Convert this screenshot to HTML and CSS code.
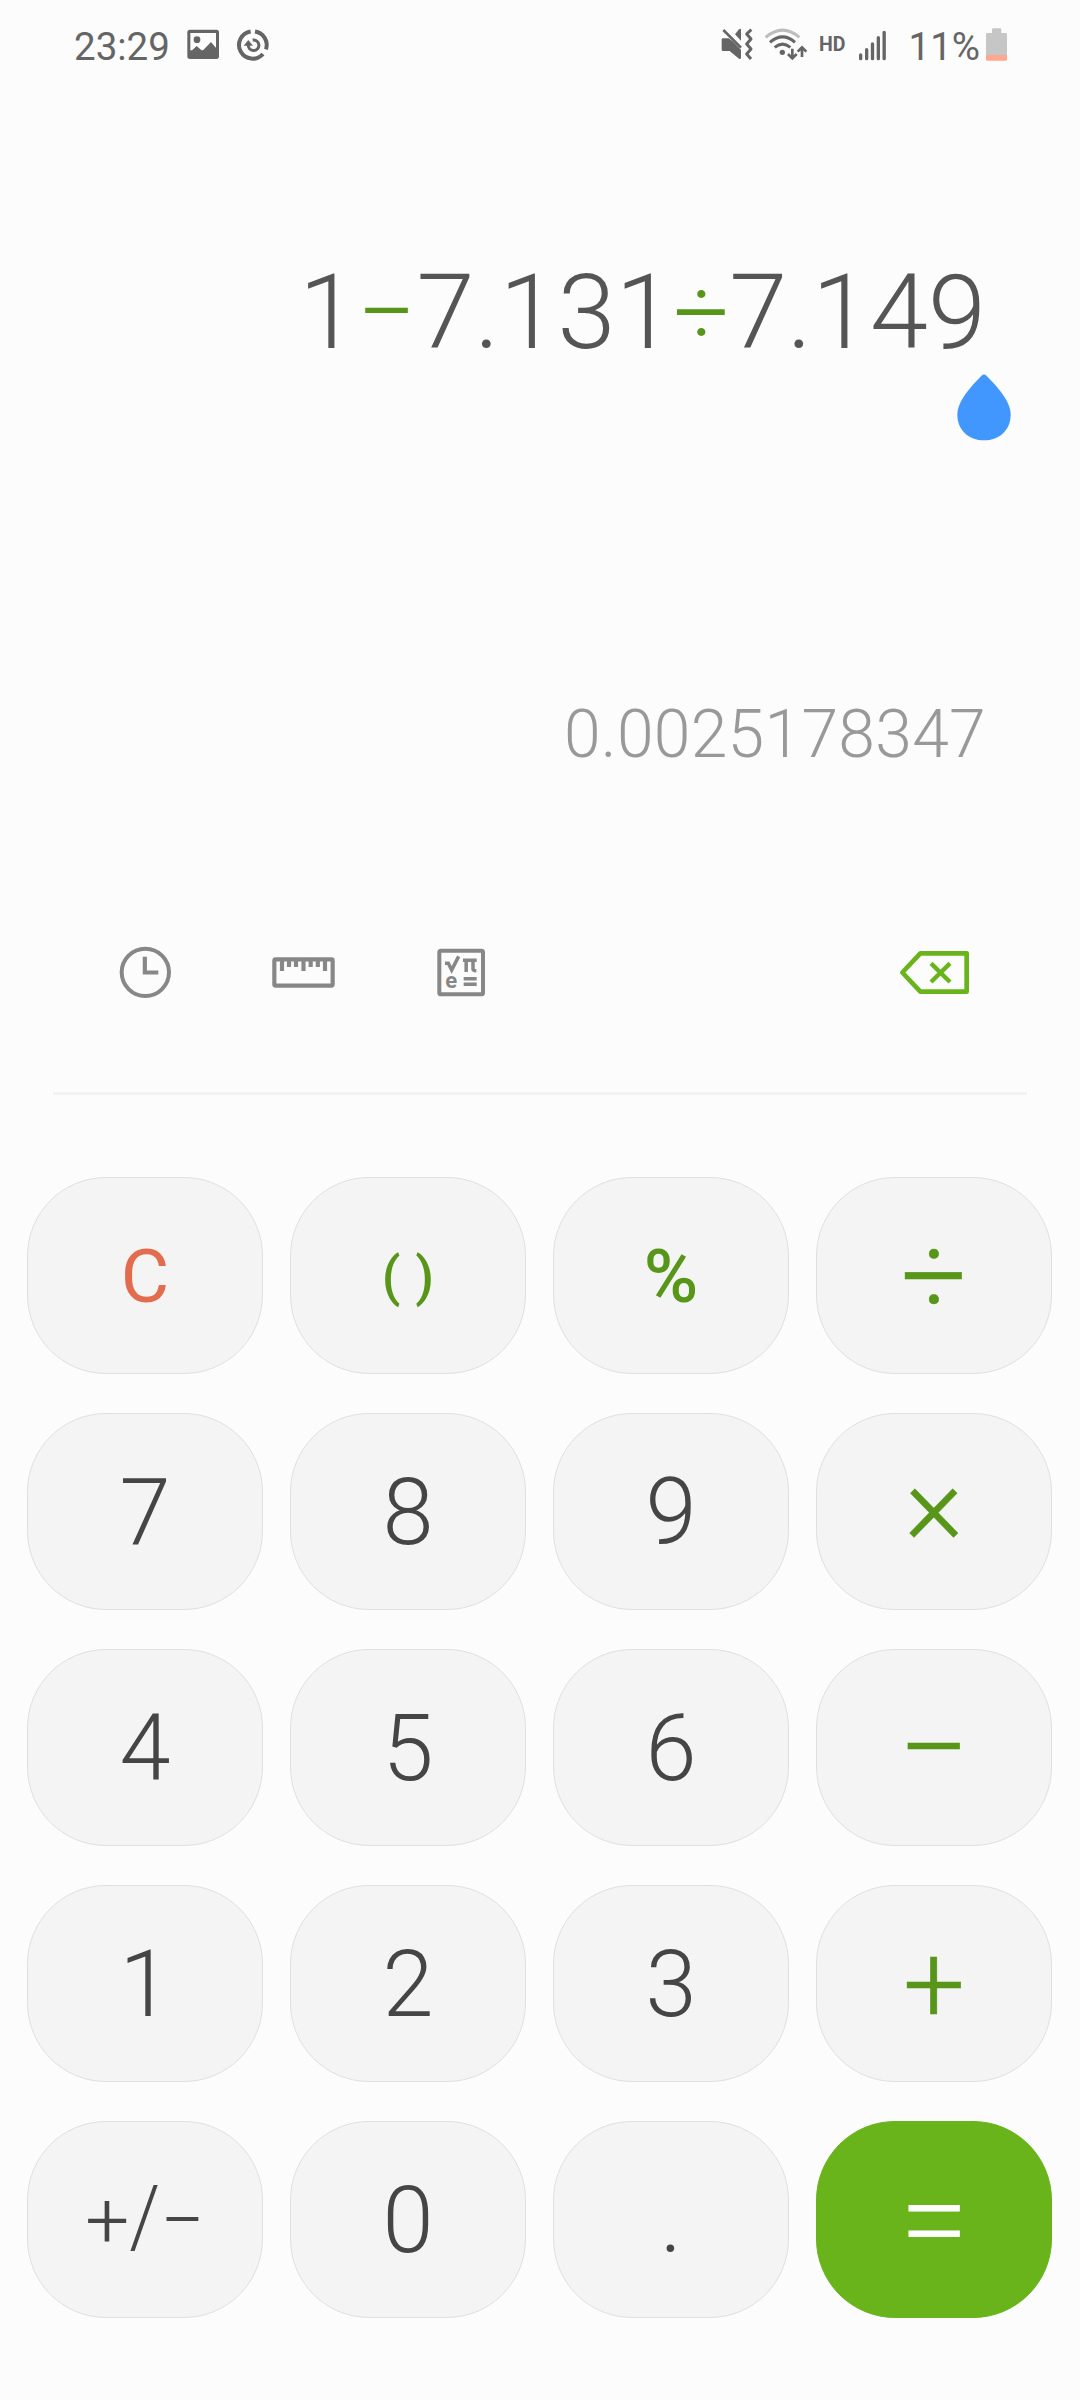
FILE: index.html
```
<!DOCTYPE html>
<html lang="en">
<head>
<meta charset="utf-8">
<title>Calculator</title>
<link rel="stylesheet" href="styles.css">
</head>
<body>
<div class="screen">
  <header class="status">
    <div class="status-left">
      <span class="status-text">23:29</span>
      <svg class="ic-photo" viewBox="378 30 102 120" width="34" height="40"><rect x="382" y="44" width="95" height="88" rx="8" fill="#656565"/><rect x="391" y="54" width="77" height="52" fill="#fcfcfc"/><circle cx="411" cy="74" r="10" fill="#656565"/><path d="M390 112l20-19 17 15 26-27 17 20v14h-80z" fill="#656565"/></svg>
      <svg class="ic-spin" viewBox="522 30 114 120" width="38" height="40" fill="none" stroke="#656565"><path d="M572 49.500A41 41 0 1 0 609 117" stroke-width="12"/><path d="M585 49.500A41 41 0 0 1 618 103" stroke-width="12"/><path d="M565 88A16 16 0 1 0 578 75" stroke-width="9"/><path d="M551 92L565 75L579 92Z" fill="#656565" stroke="none"/></svg>
    </div>
    <div class="status-right">
      <svg viewBox="60 30 105 120" width="35" height="40" fill="#656565"><path d="M69 70H86L98 79L123 104V127Q123 135 117 131L89 108H69Q65 108 65 104V74Q65 70 69 70Z"/><path d="M123 45V77L105 58L117 43Q123 38 123 45Z"/><path d="M70 45L123 98" stroke="#656565" stroke-width="8" fill="none"/><path d="M154 44L140 57L153 72L140 87L153 102L140 117L153 132" fill="none" stroke="#656565" stroke-width="9" stroke-linejoin="round"/></svg>
      <svg class="ic-wifi" viewBox="189 30 135 120" width="45" height="40" fill="none" stroke-width="9"><path d="M197 67Q248 24 298 67" stroke="#bdbdbd"/><path d="M210 82Q248 49 285 82M224 97Q248 78 271 97" stroke="#656565"/><circle cx="247" cy="112" r="8" fill="#656565"/><path d="M277 101V130M264 117L277 130L290 117M306 126V97M293 110L306 97L319 110" stroke="#656565" stroke-width="8"/></svg>
      <span class="hd">HD</span>
      <svg class="ic-signal" viewBox="474 30 90 120" width="30" height="40" stroke="#656565" stroke-width="10" stroke-linecap="round"><path d="M482 120V131M500 104V131M517.500 87V131M535 68V131M552.500 52V131"/></svg>
      <span class="status-text pct">11%</span>
      <svg class="ic-batt" viewBox="855 30 69 120" width="23" height="40"><path d="M876 44Q876 40 880 40H900Q904 40 904 44V54H917Q921 54 921 58V120H858V58Q858 54 862 54H876Z" fill="#c6c6c6"/><path d="M858 120H921V133Q921 137 917 137H862Q858 137 858 133Z" fill="#ffa78f"/></svg>
    </div>
  </header>

  <main class="display">
    <div class="expression">1<span class="op">−</span>7.131<span class="op op-divide">÷</span>7.149
      <svg class="handle" viewBox="885 396 174 210" width="58" height="70"><path d="M966 406Q972 401 978 406C1012 440 1052 484 1052 524C1052 570 1018 601 972 601C926 601 892 570 892 524C892 484 932 440 966 406Z" fill="#4297ff"/></svg>
    </div>
    <div class="result">0.0025178347</div>
  </main>

  <nav class="tools">
    <svg viewBox="54 60 165 195" width="55" height="65" fill="none" stroke="#878787" stroke-width="12"><circle cx="136" cy="157" r="71"/><path d="M134.500 110V157.500H175" stroke-width="12.500"/></svg>
    <svg viewBox="510 60 201 195" width="67" height="65" fill="none" stroke="#878787" stroke-width="12.500"><rect x="523" y="118" width="175" height="79" rx="4"/><path d="M546 118V153M567 118V141M588 118V141M610.500 118V153M632 118V141M653.500 118V141M675 118V153"/></svg>
    <svg viewBox="1003 60 159 195" width="53" height="65" fill="none" stroke="#878787" stroke-width="12"><rect x="1019" y="92" width="131" height="131" rx="5"/><path d="M1036 130H1046L1056 150L1077 109" stroke-width="10.500"/><path d="M1090 121H1131M1099.500 121V156M1120 121V147Q1120 152 1130 152" stroke-width="10.500"/><path d="M1092 176H1131M1092 192.500H1131" stroke-width="10.500"/><text x="1037" y="203" class="glyph-e">e</text></svg>
    <svg class="backspace" viewBox="54 30 222 195" width="74" height="65" fill="none" stroke="#69b31b" stroke-width="14" stroke-linejoin="round"><path d="M121 70H260V185H121L67 127.500Z"/><path d="M153 100L210 156M210 100L153 156" stroke-width="13"/></svg>
  </nav>
  <hr class="rule">

  <section class="keys">
    <button class="key clear">C</button><button class="key paren">( )</button><button class="key percent">%</button><button class="key divide">÷</button>
    <button class="key">7</button><button class="key">8</button><button class="key">9</button><button class="key times"><span>×</span></button>
    <button class="key">4</button><button class="key">5</button><button class="key">6</button><button class="key minus">−</button>
    <button class="key">1</button><button class="key">2</button><button class="key">3</button><button class="key plus">+</button>
    <button class="key sign">+<span>/</span>−</button><button class="key">0</button><button class="key">.</button><button class="key equals">=</button>
  </section>
</div>
</body>
</html>
```
FILE: styles.css
```
* {
  box-sizing: border-box;
}

body {
  margin: 0;
  background: #fcfcfc;
  font-family: Roboto, "Liberation Sans", sans-serif;
}

svg {
  display: block;
  flex: none;
}

.screen {
  width: 1080px;
  height: 2400px;
  display: flex;
  flex-direction: column;
  overflow: hidden;
}

/* status bar */
.status {
  height: 90px;
  padding: 25px 72px 0 74px;
  display: flex;
  justify-content: space-between;
  color: #656565;
}

.status-left,
.status-right {
  display: flex;
  align-items: flex-start;
}

.status-text {
  font-size: 38.5px;
  line-height: 44px;
}

.ic-photo {
  margin-left: 16px;
}

.ic-spin {
  margin-left: 14px;
}

.ic-wifi {
  margin-left: 8px;
}

.hd {
  margin-left: 11px;
  font-size: 19.5px;
  font-weight: 700;
  line-height: 40px;
}

.ic-signal {
  margin-left: 12px;
}

.pct {
  margin-left: 21px;
}

.ic-batt {
  margin-left: 5px;
}

/* expression and result */
.display {
  height: 850px;
  padding: 163px 94px 0 0;
  text-align: right;
  font-weight: 300;
}

.expression {
  position: relative;
  height: 442px;
  font-size: 104.5px;
  line-height: 120px;
  color: #555;
}

.op {
  color: #58961a;
}

.op-divide {
  font-size: 98px;
  line-height: 1;
  vertical-align: 2px;
}

.handle {
  position: absolute;
  right: -27px;
  top: 119px;
}

.result {
  font-size: 66px;
  line-height: 80px;
  letter-spacing: 0.3px;
  color: #999;
}

/* toolbar */
.tools {
  height: 152px;
  padding: 0 108px 0 118px;
  display: flex;
  align-items: flex-start;
  gap: 97px;
}

.backspace {
  margin-left: auto;
}

.glyph-e {
  font-size: 66px;
  font-weight: 700;
  fill: #878787;
  stroke: none;
}

.rule {
  width: 974px;
  height: 3px;
  margin: 0 53px;
  border: 0;
  background: #f2f2f2;
}

/* keypad */
.keys {
  margin: 82px 27px 0;
  display: grid;
  grid-template-columns: repeat(4, 236px);
  grid-auto-rows: 197px;
  gap: 39px 27px;
}

.key {
  padding: 2px 0 0;
  border: 1px solid #e0e0e0;
  border-radius: 79px;
  background: #f4f4f4;
  color: #454545;
  font-family: inherit;
  font-size: 92px;
  font-weight: 300;
  line-height: 193px;
  text-align: center;
}

.clear {
  color: #e36c4f;
  font-size: 74.5px;
  font-weight: 400;
}

.paren,
.percent,
.divide,
.times,
.minus,
.plus {
  color: #58961a;
}

.paren {
  font-size: 54px;
  font-weight: 500;
  word-spacing: 1.5px;
}

.percent {
  font-size: 74px;
  font-weight: 500;
}

.divide,
.times,
.plus {
  -webkit-text-stroke: 0.5px #58961a;
}

.divide {
  font-size: 116px;
}

.times {
  font-size: 113px;
}

.times span {
  display: block;
  transform: translateY(-8px);
}

.minus {
  font-size: 128px;
}

.plus {
  font-size: 110px;
}

.sign {
  font-size: 78px;
}

.sign span {
  display: inline-block;
  transform: scaleY(1.09);
  transform-origin: 50% 67%;
}

.equals {
  border-color: #69b31b;
  background: #69b31b;
  color: #fff;
  font-size: 126px;
}
```
